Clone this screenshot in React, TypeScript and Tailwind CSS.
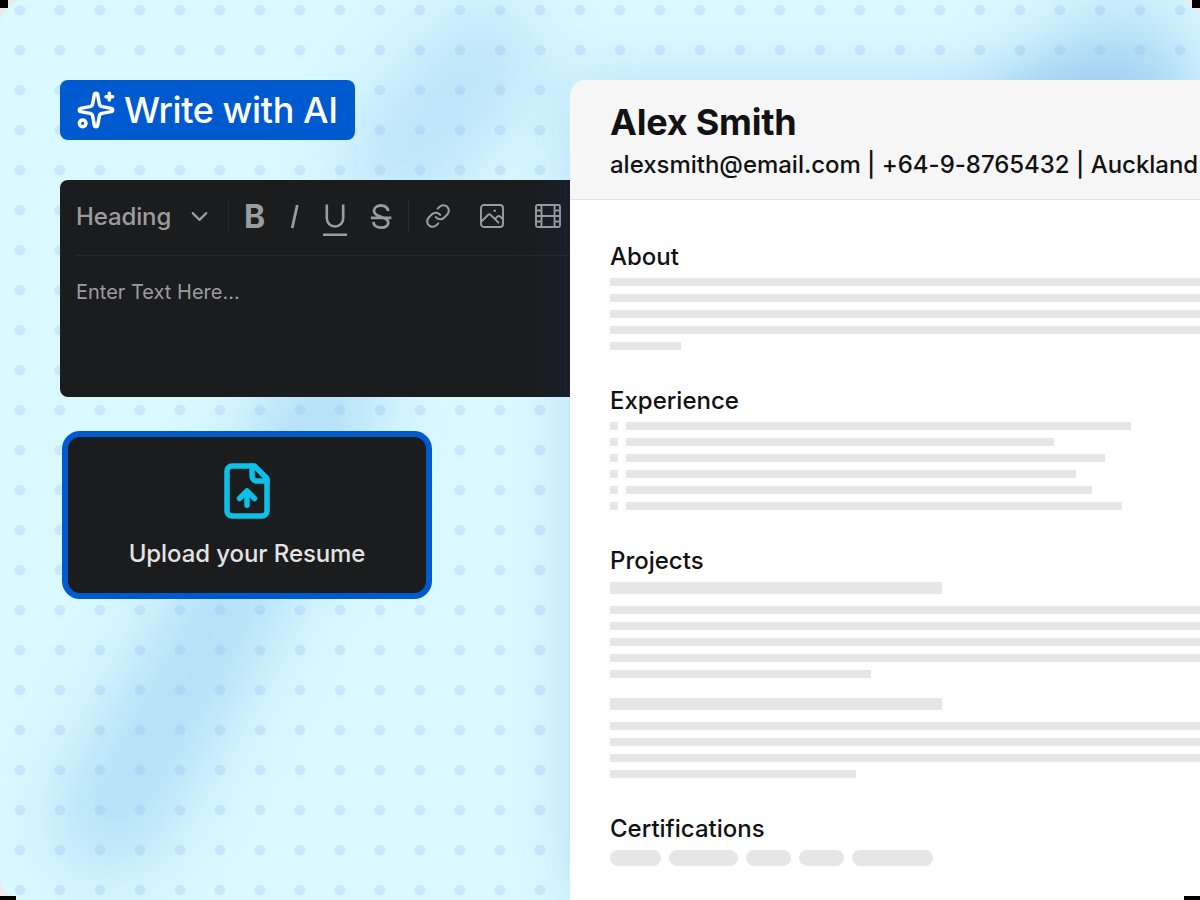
import type { ReactNode } from 'react';
import { Sparkles, Link, ChevronDown } from 'lucide-react';

const BAR = 'bg-[#e6e6e6]';

function Backdrop() {
  return (
    <svg className="absolute inset-0" width="1200" height="900" viewBox="0 0 1200 900" aria-hidden="true">
      <defs>
        <filter id="soft" filterUnits="userSpaceOnUse" x="-200" y="-200" width="1600" height="1300" colorInterpolationFilters="sRGB">
          <feGaussianBlur stdDeviation="38" />
        </filter>
        <pattern id="dots" width="40" height="40" patternUnits="userSpaceOnUse">
          <circle cx="20" cy="10" r="5.3" fill="#8fb8f0" fillOpacity="0.26" />
        </pattern>
      </defs>
      <g filter="url(#soft)" fill="none" strokeLinecap="round">
        <path d="M108 820 L210 640 L330 395" stroke="#a0d2f2" strokeOpacity="0.7" strokeWidth="104" />
        <path d="M400 160 L485 60" stroke="#a6d2f5" strokeOpacity="0.58" strokeWidth="110" />
        <path d="M1060 110 L1125 65" stroke="#94c8ee" strokeOpacity="0.62" strokeWidth="124" />
      </g>
      <rect width="1200" height="900" fill="url(#dots)" />
    </svg>
  );
}

function Corners() {
  return (
    <>
      <div className="absolute left-0 top-0 h-2 w-2 bg-black" />
      <div className="absolute right-0 top-0 h-2 w-2 bg-black" />
      <div className="absolute bottom-0 left-0 h-1 w-4 bg-black" />
      <div className="absolute bottom-0 right-0 h-1 w-4 bg-black" />
    </>
  );
}

function Editor() {
  return (
    <div className="mt-10 h-[217px] w-[600px] rounded-lg bg-[#1b1c1e] pl-4 text-[#9b9c9e]">
      <div className="flex h-[76px] items-center border-b border-[#27282a] pb-[3px]">
        <span className="w-[115px] pt-[2px] text-2xl font-medium leading-[30px] tracking-[-0.005em]">Heading</span>
        <ChevronDown size={27} strokeWidth={1.9} className="-ml-[5px]" />
        <div className="ml-[15px] h-8 w-px bg-[#27282a]" />
        <span className="ml-[15px] w-6 pt-[2px] text-[32px] font-bold leading-8">B</span>
        <svg className="ml-[15px]" width="24" height="32" viewBox="0 0 24 32" fill="none" stroke="currentColor" strokeWidth="2.8">
          <path d="M14.3 5 L9.2 28" />
        </svg>
        <svg className="ml-4" width="24" height="40" viewBox="0 0 24 40" fill="none" stroke="currentColor" strokeWidth="2.6">
          <path d="M3.8 8.5 V22.3 a8.2 8.2 0 0 0 16.4 0 V8.5 M0 38.7 H24" />
        </svg>
        <svg className="ml-[22px]" width="24" height="32" viewBox="0 0 24 32" fill="none" stroke="currentColor" strokeWidth="2.8">
          <path d="M19.2 11 C18.5 7.5 15.8 5.5 12 5.5 C8 5.5 5 7.7 5 11.1 C5 14.2 7.5 15.5 12 16.9 C17 18.5 19.3 19.7 19.3 22.5 C19.3 25.7 16.3 27.7 12.2 27.7 C7.8 27.7 4.8 25.5 4.3 21.9 M1.8 17.8 H22.4" />
        </svg>
        <div className="ml-[15px] h-8 w-px bg-[#27282a]" />
        <Link size={26} strokeWidth={1.9} className="ml-4" />
        <svg className="ml-[29px]" width="24" height="24" viewBox="0 0 24 24" fill="none" stroke="currentColor" strokeWidth="1.9">
          <rect x="1" y="1" width="22" height="22" rx="3" />
          <path d="M1.5 17.5 L8.2 10.8 Q9.5 9.7 10.8 11 L19 19.2 M14.8 15.2 L17.6 12.4 Q18.8 11.4 20 12.4 L23 15.2" />
          <circle cx="14.7" cy="6.7" r="1.2" fill="currentColor" stroke="none" />
        </svg>
        <svg className="ml-[30px]" width="28" height="24" viewBox="0 0 28 24" fill="none" stroke="currentColor" strokeWidth="1.9">
          <rect x="2" y="1" width="24" height="22" rx="1.5" />
          <path d="M7.5 1 V23 M20.5 1 V23 M7.5 12 H20.5 M2 6.5 H7.5 M2 12 H7.5 M2 17.5 H7.5 M20.5 6.5 H26 M20.5 12 H26 M20.5 17.5 H26" />
        </svg>
      </div>
      <p className="mt-[21px] text-xl leading-[30px]">Enter Text Here...</p>
    </div>
  );
}

function UploadCard() {
  return (
    <div className="ml-[2px] mt-[34px] flex h-[168px] w-[370px] flex-col items-center rounded-[18px] border-[6px] border-[#005acf] bg-[#1b1c1e] pt-[24px]">
      <svg width="60" height="60" viewBox="0 0 24 24" fill="none" stroke="#0cc0e8" strokeWidth="2.2" strokeLinecap="round" strokeLinejoin="round">
        <path d="M15 2H6a2 2 0 0 0-2 2v16a2 2 0 0 0 2 2h12a2 2 0 0 0 2-2V7Z" />
        <path d="M14 2v4a2 2 0 0 0 2 2h4" />
        <path d="M12 12.3v5.4" />
        <path d="m15 15-3-3-3 3" />
      </svg>
      <span className="mt-[17px] whitespace-nowrap text-2xl font-medium leading-8 tracking-[-0.004em] text-[#e3e3e3]">Upload your Resume</span>
    </div>
  );
}

function Lines({ widths }: { widths: number[] }) {
  return (
    <div className="flex flex-col gap-2">
      {widths.map((width, i) => (
        <div key={i} className={`h-2 ${BAR}`} style={{ width }} />
      ))}
    </div>
  );
}

function Section({ title, children }: { title: string; children: ReactNode }) {
  return (
    <section>
      <h2 className="mb-[6px] text-2xl font-medium leading-[30px]">{title}</h2>
      {children}
    </section>
  );
}

function Resume() {
  return (
    <article className="relative mt-20 h-[820px] w-[630px] shrink-0 overflow-hidden rounded-tl-2xl bg-white text-[#111213] shadow-[0_0_60px_rgba(0,90,210,0.16)]">
      <header className="h-[120px] whitespace-nowrap border-b border-[#e2e2e2] bg-[#f6f6f6] pl-10 pt-5">
        <h1 className="text-4xl font-bold leading-[44px] tracking-[-0.006em]">Alex Smith</h1>
        <p className="pt-px text-2xl font-medium leading-10 tracking-[-0.001em]">alexsmith@email.com | +64-9-8765432 | Auckland</p>
      </header>
      <div className="flex flex-col gap-9 pl-10 pt-[42px]">
        <Section title="About">
          <Lines widths={[590, 590, 590, 590, 71]} />
        </Section>
        <Section title="Experience">
          <div className="flex gap-2">
            <Lines widths={[8, 8, 8, 8, 8, 8]} />
            <Lines widths={[505, 428, 479, 450, 466, 496]} />
          </div>
        </Section>
        <Section title="Projects">
          <div className={`mb-3 h-3 w-[332px] ${BAR}`} />
          <Lines widths={[590, 590, 590, 590, 261]} />
          <div className={`mb-3 mt-5 h-3 w-[332px] ${BAR}`} />
          <Lines widths={[590, 590, 590, 246]} />
        </Section>
        <Section title="Certifications">
          <div className="flex gap-2">
            {[51, 69, 45, 45, 81].map((width, i) => (
              <div key={i} className={`h-4 rounded-full ${BAR}`} style={{ width }} />
            ))}
          </div>
        </Section>
      </div>
    </article>
  );
}

export default function App() {
  return (
    <div className="relative h-[900px] w-[1200px] overflow-hidden bg-[#ebe9e9] font-['Inter',sans-serif]">
      <div className="relative flex h-full overflow-hidden rounded-l-3xl rounded-tr-3xl bg-[#d9f9ff]">
        <Backdrop />
        <div className="relative w-[570px] shrink-0 pl-[60px] pt-20">
          <div className="flex h-[60px] w-[295px] items-center gap-2 whitespace-nowrap rounded-lg bg-[#005acf] px-4 text-white">
            <Sparkles size={40} strokeWidth={2.1} className="shrink-0" />
            <span className="text-4xl font-medium tracking-[-0.011em]">Write with AI</span>
          </div>
          <Editor />
          <UploadCard />
        </div>
        <Resume />
      </div>
      <Corners />
    </div>
  );
}
